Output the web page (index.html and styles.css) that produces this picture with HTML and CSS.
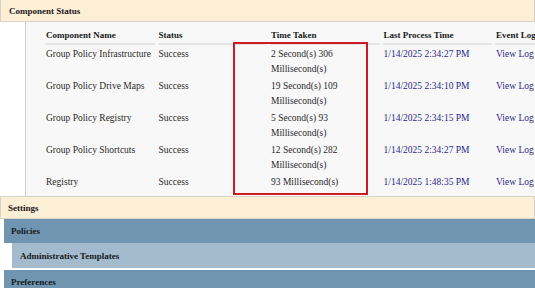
FILE: index.html
```html
<!DOCTYPE html>
<html>
<head>
<meta charset="utf-8">
<link rel="stylesheet" href="styles.css">
</head>
<body>
<div class="page">
  <div class="band peach">Component Status</div>
  <div class="content">
    <table class="grid">
      <colgroup><col class="c"><col class="c"><col class="c"><col class="c"><col class="c"></colgroup>
      <thead>
        <tr><th>Component Name</th><th>Status</th><th>Time Taken</th><th>Last Process Time</th><th>Event Log</th></tr>
      </thead>
      <tbody>
        <tr><td>Group Policy Infrastructure</td><td>Success</td><td>2 Second(s) 306 Millisecond(s)</td><td class="link">1/14/2025 2:34:27 PM</td><td class="link">View Log</td></tr>
        <tr><td>Group Policy Drive Maps</td><td>Success</td><td>19 Second(s) 109 Millisecond(s)</td><td class="link">1/14/2025 2:34:10 PM</td><td class="link">View Log</td></tr>
        <tr><td>Group Policy Registry</td><td>Success</td><td>5 Second(s) 93 Millisecond(s)</td><td class="link">1/14/2025 2:34:15 PM</td><td class="link">View Log</td></tr>
        <tr><td>Group Policy Shortcuts</td><td>Success</td><td>12 Second(s) 282 Millisecond(s)</td><td class="link">1/14/2025 2:34:27 PM</td><td class="link">View Log</td></tr>
        <tr><td>Registry</td><td>Success</td><td>93 Millisecond(s)</td><td class="link">1/14/2025 1:48:35 PM</td><td class="link">View Log</td></tr>
      </tbody>
    </table>
    <div class="highlight"></div>
  </div>
  <div class="band peach settings">Settings</div>
  <div class="band blue l1">Policies</div>
  <div class="band light l2">Administrative Templates</div>
  <div class="band blue l1 gap">Preferences</div>
</div>
</body>
</html>
```
FILE: styles.css
```css
html, body {
  margin: 0;
  padding: 0;
  background: #ffffff;
}
body {
  font-family: "Liberation Serif", "Times New Roman", serif;
  font-size: 9.5px;
  color: #2a2a2a;
  width: 535px;
  height: 288px;
  overflow: hidden;
}
.page {
  display: flex;
  flex-direction: column;
}
.band {
  font-weight: bold;
  font-size: 9px;
  color: #1a1a1a;
  display: flex;
  align-items: center;
  box-sizing: border-box;
}
.peach {
  background: #fdefd5;
  border: 1px solid #d9d3c6;
  border-top: none;
  height: 22px;
  padding-left: 8px;
}
.settings {
  border-top: 1px solid #d9d3c6;
  height: 23px;
  padding-left: 7px;
}
.blue {
  background: #7095b1;
  color: #141a20;
}
.l1 {
  margin-left: 4px;
  height: 24px;
  padding-left: 7px;
}
.light {
  background: #a4bacd;
  color: #141a20;
}
.l2 {
  margin-left: 12px;
  height: 25px;
  padding-left: 8px;
}
.gap {
  margin-top: 2px;
}
.content {
  position: relative;
  margin-left: 25px;
  border-left: 1px solid #cfcfcf;
  background: #f8f8f8;
  height: 174px;
  padding: 4px 0 0 16px;
  box-sizing: border-box;
  overflow: hidden;
}
.grid {
  border-collapse: separate;
  border-spacing: 3px 0;
  table-layout: fixed;
  width: 565.5px;
}
.c {
  width: 109.5px;
}
.grid th, .grid td {
  text-align: left;
  vertical-align: top;
  line-height: 15px;
  padding: 1px;
  overflow: hidden;
}
.grid th {
  font-size: 9px;
  font-weight: bold;
  color: #1a1a1a;
  border-bottom: 2px solid #e4e4e4;
  padding-top: 2px;
  padding-bottom: 0;
  white-space: nowrap;
}
.grid td {
  height: 30px;
  padding-top: 2px;
  padding-bottom: 0;
}
.link {
  color: #2a2a8a;
}
.highlight {
  position: absolute;
  left: 207px;
  top: 20px;
  width: 131px;
  height: 149px;
  border: 2px solid #cc1b22;
}
```
